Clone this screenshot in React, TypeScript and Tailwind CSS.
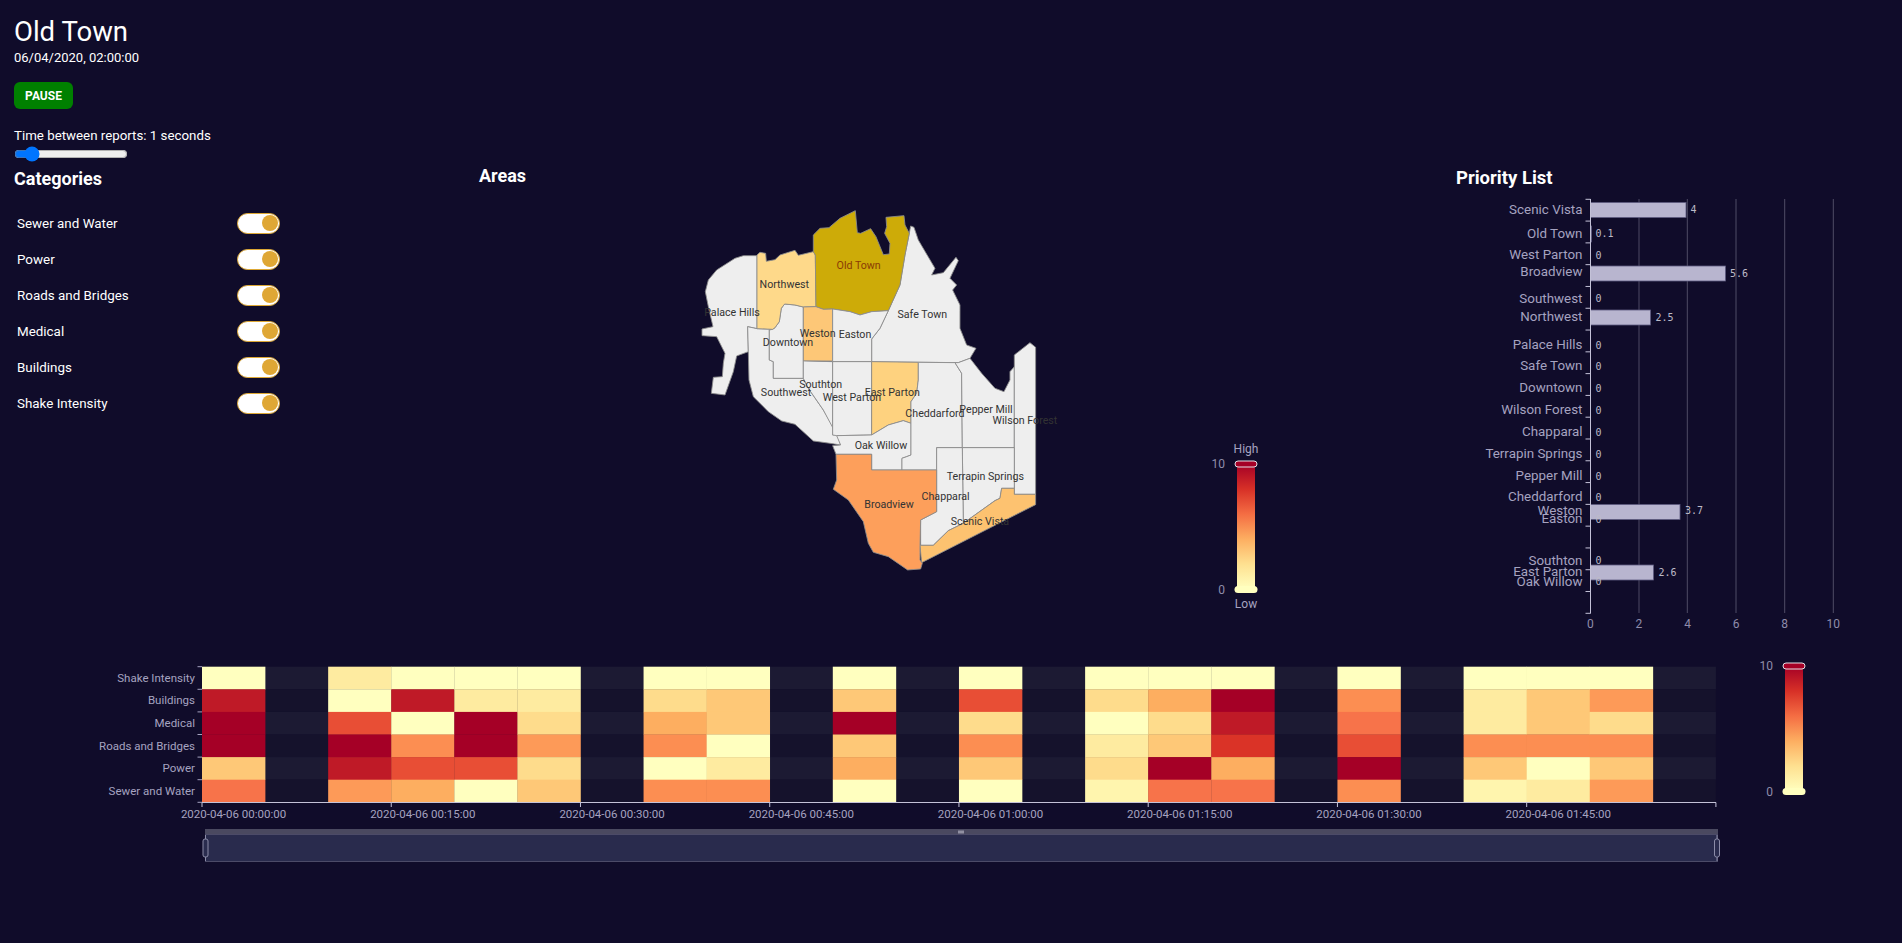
import React from 'react';

const categories = ['Sewer and Water', 'Power', 'Roads and Bridges', 'Medical', 'Buildings', 'Shake Intensity'];

// Map regions, in 3x coordinates of the crop that starts at (680, 190)
const regions = [
  { name: 'Palace Hills', fill: '#eeeeee', pts: '231,197 190,197 165,205 110,240 85,270 76,305 85,350 99,410 66,417 66,437 110,440 135,490 130,520 127,560 100,562 94,610 135,615 160,545 170,498 205,485 203,410 231,416' },
  { name: 'Southwest', fill: '#eeeeee', pts: '203,410 231,416 278,418 268,420 268,510 280,515 280,565 370,565 385,595 430,660 470,730 482,765 450,760 400,753 345,703 305,693 265,665 220,620 207,570 205,485' },
  { name: 'Downtown', fill: '#eeeeee', pts: '278,418 268,420 268,510 280,515 280,565 370,565 370,351 345,345 314,342 304,355 298,395 285,413' },
  { name: 'Northwest', fill: '#fed98a', pts: '231,195 240,187 257,190 259,214 285,209 300,195 345,181 355,196 400,185 406,195 408,350 370,351 345,345 314,342 304,355 298,395 285,413 278,418 231,416' },
  { name: 'Safe Town', fill: '#eeeeee', pts: '688,130 692,108 702,112 715,150 765,235 755,255 790,248 828,202 835,212 810,265 830,285 818,300 840,345 840,415 860,465 888,475 870,505 835,518 575,515 575,447 600,415 625,362 660,285 675,195' },
  { name: 'Old Town', fill: '#cdab08', pts: '400,135 420,115 447,113 480,85 526,62 532,128 542,130 572,116 588,140 610,194 628,192 630,160 614,130 620,110 618,82 672,77 675,105 688,130 675,195 660,285 625,362 575,365 540,375 510,365 458,357 430,358 408,350 406,195 400,185' },
  { name: 'Weston', fill: '#fdc777', pts: '370,351 408,350 430,358 458,357 458,513 370,513' },
  { name: 'Easton', fill: '#eeeeee', pts: '458,357 510,365 540,375 575,365 625,362 600,415 575,447 575,515 458,515' },
  { name: 'Southton', fill: '#eeeeee', pts: '370,513 458,515 458,735 470,735 430,660 385,595 370,565' },
  { name: 'West Parton', fill: '#eeeeee', pts: '458,515 575,515 575,735 470,737 458,735' },
  { name: 'East Parton', fill: '#fed27f', pts: '575,515 715,517 715,570 710,610 693,635 693,700 670,692 625,705 575,735' },
  { name: 'Oak Willow', fill: '#eeeeee', pts: '470,737 575,735 625,705 670,692 693,700 693,795 680,800 666,805 666,840 575,840 575,793 468,793 458,767 482,765' },
  { name: 'Cheddarford', fill: '#eeeeee', pts: '715,517 825,518 845,550 847,773 770,773 770,840 666,840 666,805 680,800 693,795 693,635 710,610 715,570' },
  { name: 'Pepper Mill', fill: '#eeeeee', pts: '825,518 835,518 870,505 905,550 945,595 972,605 990,570 990,545 1003,530 1003,773 847,773 845,550' },
  { name: 'Wilson Forest', fill: '#eeeeee', pts: '1003,495 1050,458 1067,472 1067,913 1003,913' },
  { name: 'Terrapin Springs', fill: '#eeeeee', pts: '847,773 1003,773 1003,895 965,895 960,925 945,932 850,1000' },
  { name: 'Chapparal', fill: '#eeeeee', pts: '770,773 847,773 850,1000 805,1022 760,1066 722,1066 722,990 770,965 770,840' },
  { name: 'Scenic Vista', fill: '#fdc270', pts: '1003,913 1067,913 1067,944 725,1118 720,1066 760,1066 805,1022 850,1000 945,932 960,925 965,895 1003,895' },
  { name: 'Broadview', fill: '#fd9f5b', pts: '468,793 575,793 575,840 770,840 770,965 722,990 720,1066 720,1110 727,1120 722,1137 683,1140 625,1100 580,1087 565,1060 550,995 505,930 460,898 470,870' },
];

const mapLabels: [string, number, number, string?][] = [
  ['Old Town', 536, 226, '#8a3b05'],
  ['Northwest', 313, 283],
  ['Palace Hills', 156, 366],
  ['Safe Town', 727, 374],
  ['Weston', 413, 431],
  ['Easton', 525, 433],
  ['Downtown', 324, 458],
  ['Southton', 422, 582],
  ['Southwest', 318, 606],
  ['East Parton', 637, 606],
  ['West Parton', 516, 622],
  ['Cheddarford', 765, 671],
  ['Pepper Mill', 918, 658],
  ['Wilson Forest', 1035, 690],
  ['Oak Willow', 603, 765],
  ['Terrapin Springs', 916, 858],
  ['Chapparal', 797, 920],
  ['Broadview', 627, 944],
  ['Scenic Vista', 900, 993],
];

const priorityLabels: [string, number][] = [
  ['Scenic Vista', 209], ['Old Town', 233.5], ['West Parton', 254.5], ['Broadview', 271.5], ['Southwest', 298],
  ['Northwest', 316.5], ['Palace Hills', 344.5], ['Safe Town', 365], ['Downtown', 387.5], ['Wilson Forest', 409.5],
  ['Chapparal', 431], ['Terrapin Springs', 453.5], ['Pepper Mill', 475.5], ['Cheddarford', 496.5], ['Weston', 510],
  ['Easton', 518.5], ['Southton', 560], ['East Parton', 571.5], ['Oak Willow', 581.5],
];

const priorityBars = [
  { y: 202.5, end: 1686 },
  { y: 226, end: 1591.5 },
  { y: 266, end: 1725.5 },
  { y: 310, end: 1650.5 },
  { y: 504.5, end: 1680 },
  { y: 565, end: 1653.5 },
];

const priorityValues: [string, number, number][] = [
  ['4', 1690.5, 209.5], ['0.1', 1595.5, 233], ['0', 1595.5, 255], ['5.6', 1730, 273], ['0', 1595.5, 298], ['2.5', 1655.5, 317],
  ['0', 1595.5, 345], ['0', 1595.5, 366], ['0', 1595.5, 388], ['0', 1595.5, 410], ['0', 1595.5, 432], ['0', 1595.5, 454],
  ['0', 1595.5, 476], ['0', 1595.5, 497], ['3.7', 1685, 510.5], ['0', 1595.5, 519.5], ['0', 1595.5, 560], ['2.6', 1658.5, 572], ['0', 1595.5, 581],
];

const heatRows = ['Shake Intensity', 'Buildings', 'Medical', 'Roads and Bridges', 'Power', 'Sewer and Water'];
const Y = '#ffffbf';
const A = '#a50026';
const B = '#bf1a27';
const C = '#e84e35';
const D = '#f7734a';
const E = '#fc8e52';
const F = '#fd9a58';
const G = '#fdae60';
const H = '#fec877';
const I = '#fedc8c';
const J = '#feeba0';
const K = '#fff5ae';

// One entry per 5 minute column, top row first; null is a column with no reports
const heatColumns: (string[] | null)[] = [
  [Y, B, A, A, H, D],
  null,
  [J, Y, C, A, B, F],
  [Y, B, Y, E, C, G],
  [Y, J, A, A, C, Y],
  [Y, J, I, F, I, H],
  null,
  [Y, I, G, E, Y, E],
  [Y, H, H, Y, J, E],
  null,
  [Y, H, A, H, G, Y],
  null,
  [Y, C, I, E, H, Y],
  null,
  [Y, I, Y, J, I, K],
  [Y, G, I, H, A, D],
  [Y, A, B, '#da3327', G, D],
  null,
  [Y, E, D, C, A, E],
  null,
  [Y, J, J, E, H, K],
  [Y, H, H, E, Y, J],
  [Y, F, I, E, H, F],
  null,
];

const HEAT_X = 202;
const HEAT_TOP = 666.7;
const CELL_W = 63.08;
const CELL_H = 22.6;
const heatTimes = ['00:00:00', '00:15:00', '00:30:00', '00:45:00', '01:00:00', '01:15:00', '01:30:00', '01:45:00'];

const Legend = ({ id, x, top, bottom, labels }: { id: string; x: number; top: number; bottom: number; labels: boolean }) => (
  <g>
    <defs>
      <linearGradient id={id} x1="0" y1="1" x2="0" y2="0">
        <stop offset="0%" stopColor="#ffffbf" />
        <stop offset="20%" stopColor="#fee090" />
        <stop offset="40%" stopColor="#fdae61" />
        <stop offset="60%" stopColor="#f46d43" />
        <stop offset="80%" stopColor="#d73027" />
        <stop offset="100%" stopColor="#a50026" />
      </linearGradient>
    </defs>
    <rect x={x} y={top} width="18" height={bottom - top} fill={`url(#${id})`} />
    <rect x={x - 2} y={top - 3} width="22" height="6" rx="3" fill="#a50026" stroke="#e3dfe6" strokeWidth="1" />
    <rect x={x - 2.5} y={bottom - 3} width="23" height="7" rx="3.5" fill="#ffffbf" />
    <text x={x - 12} y={top + 4} textAnchor="end" fontSize="12" fill="#8f8cab">10</text>
    <text x={x - 12} y={bottom + 5} textAnchor="end" fontSize="12" fill="#8f8cab">0</text>
    {labels && (
      <>
        <text x={x + 9} y={top - 11} textAnchor="middle" fontSize="12" fill="#a6a3c0">High</text>
        <text x={x + 9} y={bottom + 19} textAnchor="middle" fontSize="12" fill="#a6a3c0">Low</text>
      </>
    )}
  </g>
);

const AreasChart = () => (
  <svg width="961" height="440" viewBox="479 190 961 440" className="block">
    <g transform="translate(680 190) scale(0.3333)">
      {regions.map((r) => (
        <polygon key={r.name} points={r.pts} fill={r.fill} stroke="#8c8c8c" strokeWidth="2.6" strokeLinejoin="round" />
      ))}
      {mapLabels.map(([name, x, y, color]) => (
        <text key={name} x={x} y={y + 11} textAnchor="middle" fontSize="32" fill={color ?? '#333333'}>{name}</text>
      ))}
    </g>
    <Legend id="areasLegend" x={1237} top={464} bottom={589} labels />
  </svg>
);

const PriorityChart = () => (
  <svg width="462" height="450" viewBox="1440 190 462 450" className="block">
    {[1639, 1687.3, 1736, 1784.7, 1833.3].map((x, i) => (
      <line key={x} x1={x} x2={x} y1="199" y2="613" stroke={i === 0 ? '#36334f' : '#4f4d66'} strokeWidth={i === 0 ? 1.6 : 1} />
    ))}
    {Array.from({ length: 20 }, (_, i) => 199.3 + i * 21.79).map((y) => (
      <line key={y} x1="1585.5" x2="1590.5" y1={y} y2={y} stroke="#c4c2d8" />
    ))}
    {priorityBars.map((b) => (
      <rect key={b.y} x="1590.5" y={b.y} width={b.end - 1590.5} height={b.y === 226 ? 16 : 15} fill="#b8b5cf" stroke="#5e5a7f" strokeWidth="0.8" />
    ))}
    <line x1="1590.5" x2="1590.5" y1="199" y2="613.5" stroke="#c4c2d8" />
    {priorityLabels.map(([name, y]) => (
      <text key={name} x="1582.5" y={y + 4.5} textAnchor="end" fontSize="13.4" fill="#a6a3c0">{name}</text>
    ))}
    {priorityValues.map(([v, x, y], i) => (
      <text key={i} x={x} y={y + 3.5} fontSize="10" fill="#bdbbc8" className="font-['DejaVu_Sans_Mono',monospace]">{v}</text>
    ))}
    {[0, 2, 4, 6, 8, 10].map((v, i) => (
      <text key={v} x={1590.3 + i * 48.6} y="628" textAnchor="middle" fontSize="12" fill="#8f8cab">{v}</text>
    ))}
  </svg>
);

const HeatmapChart = () => (
  <svg width="1902" height="230" viewBox="0 650 1902 230" className="block">
    {heatRows.map((name, r) => (
      <g key={name}>
        <rect x={HEAT_X} y={HEAT_TOP + r * CELL_H} width={CELL_W * 24} height={CELL_H} fill={r % 2 === 0 ? '#1c1a33' : '#15122c'} />
        <text x="195" y={HEAT_TOP + r * CELL_H + 15} textAnchor="end" fontSize="11.5" fill="#a6a3c0">{name}</text>
      </g>
    ))}
    {heatColumns.map((col, c) =>
      col
        ? col.map((color, r) => (
            <rect key={`${c}-${r}`} x={HEAT_X + c * CELL_W} y={HEAT_TOP + r * CELL_H} width={CELL_W + 0.3} height={CELL_H + 0.3} fill={color} />
          ))
        : null
    )}
    {Array.from({ length: 7 }, (_, i) => HEAT_TOP + i * CELL_H).map((y) => (
      <line key={y} x1="197.5" x2="202" y1={y} y2={y} stroke="#a6a3c0" />
    ))}
    <line x1={HEAT_X} x2="1716" y1="802.5" y2="802.5" stroke="#c4c2d8" />
    {Array.from({ length: 9 }, (_, i) => HEAT_X + i * 3 * CELL_W).map((x) => (
      <line key={x} x1={x} x2={x} y1="802.5" y2="807" stroke="#c4c2d8" />
    ))}
    {heatTimes.map((t, i) => (
      <text key={t} x={HEAT_X + i * 3 * CELL_W + CELL_W / 2} y="817.5" textAnchor="middle" fontSize="11.5" fill="#a6a3c0">{`2020-04-06 ${t}`}</text>
    ))}

    {/* time range slider */}
    <rect x="205" y="829" width="1513" height="5.5" fill="#4a4960" />
    <rect x="205.5" y="834.5" width="1512" height="27" fill="#292b4d" stroke="#4c4b68" />
    <path d="M959 830.5v3M961 830.5v3M963 830.5v3" stroke="#d8d8e4" strokeWidth="1" />
    <path d="M205.5 835v26M1717 835v26" stroke="#8c8ca8" />
    <rect x="203" y="839" width="5" height="18" rx="2" fill="#2a2c4e" stroke="#8c8ca8" />
    <rect x="1714.5" y="839" width="5" height="18" rx="2" fill="#2a2c4e" stroke="#8c8ca8" />

    <Legend id="heatLegend" x={1785} top={666} bottom={791} labels={false} />
  </svg>
);

const Toggle = () => (
  <div className="flex h-[21px] w-[43px] items-center justify-end rounded-full border border-[#dda835] bg-white pr-[1.5px]">
    <div className="h-[16px] w-[16px] rounded-full bg-[#dfa735]" />
  </div>
);

export default function App() {
  return (
    <div className="h-[943px] overflow-hidden bg-[#100c2a] text-white font-['Roboto','Noto_Sans',sans-serif]">
      <div className="h-[166px] pl-[14px] pt-[14px]">
        <h1 className="text-[27.5px] leading-[36px]">Old Town</h1>
        <p className="-mt-[2px] text-[13px] leading-[20px]">06/04/2020, 02:00:00</p>
        <button className="mt-[14px] block h-[27px] w-[59px] rounded-[6px] bg-[#008000] text-[12px] font-bold leading-none">PAUSE</button>
        <p className="mt-[17px] text-[13.3px] leading-[20px]">Time between reports: 1 seconds</p>
        <input type="range" min={0} max={10} defaultValue={1} className="m-0 block h-[16px] w-[114px] accent-[#0075ff]" />
      </div>

      <div className="flex h-[484px]">
        <div className="w-[479px] pl-[14px] pt-[1px]">
          <h2 className="text-[18px] font-bold leading-[24px]">Categories</h2>
          <div className="mt-[14px] w-[266px]">
            {categories.map((c) => (
              <div key={c} className="flex h-[36px] items-center justify-between pl-[3px] text-[13.4px]">
                <span className="pt-[3px]">{c}</span>
                <Toggle />
              </div>
            ))}
          </div>
        </div>
        <div className="w-[961px]">
          <h2 className="mb-[4px] text-[18px] font-bold leading-[20px]">Areas</h2>
          <AreasChart />
        </div>
        <div className="w-[462px]">
          <h2 className="pl-[16px] text-[18.5px] font-bold leading-[24px]">Priority List</h2>
          <PriorityChart />
        </div>
      </div>

      <HeatmapChart />
    </div>
  );
}
